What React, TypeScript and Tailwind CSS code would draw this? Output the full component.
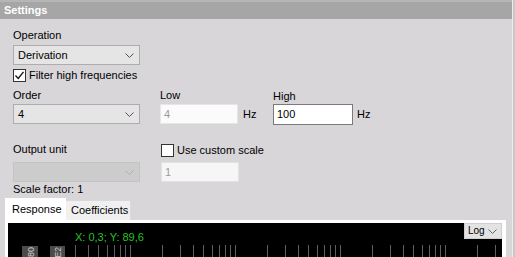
import React from 'react'

const FONT = "font-['Liberation_Sans',Arial,sans-serif]"

function Chevron({ color = '#444' }: { color?: string }) {
  return (
    <svg width="9" height="5" viewBox="0 0 9 5" className="shrink-0">
      <path d="M0.5 0.5 L4.5 4.5 L8.5 0.5" stroke={color} strokeWidth="1" fill="none" />
    </svg>
  )
}

function Select({ value, disabled }: { value?: string; disabled?: boolean }) {
  return (
    <div
      className={`flex h-[20px] w-[127px] items-center justify-between border pl-[4px] pr-[5px] ${
        disabled ? 'border-[#c4c4c4] bg-[#cdcccd]' : 'border-[#adadad] bg-[#e5e5e5]'
      }`}
    >
      <span className="text-[11px] leading-[13px] text-black">{value}</span>
      <Chevron color={disabled ? '#b0b0b0' : '#555'} />
    </div>
  )
}

function Check({ checked }: { checked?: boolean }) {
  return (
    <div className="flex h-[13px] w-[13px] shrink-0 items-center justify-center border border-[#333] bg-white">
      {checked && (
        <svg width="11" height="11" viewBox="0 0 11 11">
          <path d="M1.5 5.5 L4.2 8.5 L9.5 1.8" stroke="#111" strokeWidth="1.3" fill="none" />
        </svg>
      )}
    </div>
  )
}

// log-scale grid, decades 105px wide, first one starting at x=17 in chart space
const ticks: number[] = []
for (let d = 0; d < 5; d++) {
  for (let k = 1; k < 10; k++) {
    const x = 17 + d * 105 + 105 * Math.log10(k)
    if (x > 60 && x < 500) ticks.push(Math.round(x) + 0.5)
  }
}

export default function App() {
  return (
    <div className={`${FONT} flex h-[257px] w-[515px] overflow-hidden bg-[#c9c9c9]`}>
      <div className="flex w-[513px] flex-col border-r border-[#ececec] bg-[#d8d6d9]">
        <div className="flex h-[19px] shrink-0 items-center border-t-[2px] border-[#b6b6b6] bg-[#a6a6a6] px-[4px]">
          <span className="text-[11px] font-bold leading-[13px] text-white">Settings</span>
        </div>

        <div className="px-[13px] pt-[10px] text-[11px] leading-[13px] text-black">
          <div>Operation</div>
          <div className="mt-[3px]">
            <Select value="Derivation" />
          </div>
          <div className="mt-[4px] flex items-center gap-[3px]">
            <Check checked />
            <span>Filter high frequencies</span>
          </div>

          <div className="mt-[7px] flex">
            <div className="w-[127px]">
              <div>Order</div>
              <div className="mt-[2px]">
                <Select value="4" />
              </div>
            </div>
            <div className="ml-[20px] w-[113px]">
              <div>Low</div>
              <div className="mt-[2px] flex items-center">
                <div className="flex h-[20px] w-[78px] items-center border border-[#e6e6e6] bg-[#fbfbfb] px-[3px] text-[#9a9a9a]">
                  4
                </div>
                <span className="ml-[5px]">Hz</span>
              </div>
            </div>
            <div>
              <div className="pt-[1px]">High</div>
              <div className="mt-[1px] flex items-center">
                <div className="flex h-[21px] w-[80px] items-center border border-[#7a7a7a] bg-white px-[3px]">
                  100
                </div>
                <span className="ml-[4px]">Hz</span>
              </div>
            </div>
          </div>

          <div className="mt-[18px] flex">
            <div className="w-[127px]">
              <div className="h-[14px] text-black">Output unit</div>
              <div className="mt-[5px]">
                <Select disabled />
              </div>
              <div className="mt-[1px]">Scale factor: 1</div>
            </div>
            <div className="ml-[21px]">
              <div className="flex h-[14px] items-center gap-[3px]">
                <Check />
                <span>Use custom scale</span>
              </div>
              <div className="mt-[5px] flex h-[20px] w-[78px] items-center border border-[#e2e2e2] bg-[#f6f6f6] px-[3px] text-[#9a9a9a]">
                1
              </div>
            </div>
          </div>
        </div>

        <div className="mt-[2px] px-[5px] text-[11px] leading-[13px] text-black">
          <div className="flex h-[22px] items-end">
            <div className="flex h-[22px] w-[61px] items-center bg-white pl-[7px]">Response</div>
            <div className="flex h-[20px] w-[65px] items-center border-r border-t border-[#d9d9d9] bg-[#f0f0f0] pl-[5px]">
              Coefficients
            </div>
          </div>
          <div className="mr-[1px] bg-white pb-[3px] pl-[3px] pr-[4px] pt-[3px]">
            <div className="relative h-[120px] bg-black">
              <svg className="absolute inset-0" width="496" height="120">
                {ticks.map((x) => (
                  <line key={x} x1={x} x2={x} y1={22} y2={120} stroke="#5e5e5e" strokeWidth="1" />
                ))}
                <rect x="14" y="23" width="16" height="40" fill="#4b4b4b" />
                <rect x="42" y="23" width="15" height="40" fill="#4b4b4b" />
                <text
                  transform="translate(25.5 24) rotate(-90)"
                  textAnchor="end"
                  fontSize="9"
                  fill="#cfcfcf"
                  fontFamily="Liberation Sans, Arial, sans-serif"
                >
                  80
                </text>
                <text
                  transform="translate(53 24) rotate(-90)"
                  textAnchor="end"
                  fontSize="8.5"
                  fill="#cfcfcf"
                  fontFamily="Liberation Sans, Arial, sans-serif"
                >
                  E2
                </text>
              </svg>
              <div className="absolute left-[67px] top-[8px] text-[11px] leading-[12px] text-[#27c227]">
                X: 0,3; Y: 89,6
              </div>
              <div className="absolute right-0 top-0 flex h-[16px] w-[38px] items-center justify-between border border-[#cfcfcf] bg-[#e3e3e3] pl-[3px] pr-[4px]">
                <span className="text-[10px] leading-[12px] text-black">Log</span>
                <Chevron color="#666" />
              </div>
            </div>
          </div>
        </div>
      </div>
    </div>
  )
}
